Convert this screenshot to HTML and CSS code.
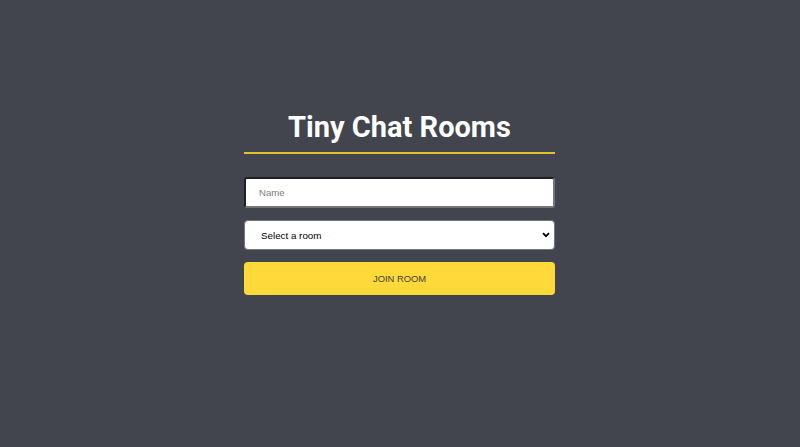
FILE: index.html
```html
<!DOCTYPE html>
<html>
<head>
<meta charset="utf-8">
<link rel="stylesheet" href="styles.css">
</head>
<body>
<main class="page">
  <div class="card">
    <h1 class="title">Tiny Chat Rooms</h1>
    <form class="form">
      <input class="name" type="text" placeholder="Name">
      <select class="room">
        <option>Select a room</option>
      </select>
      <button class="join" type="button">JOIN ROOM</button>
    </form>
  </div>
</main>
</body>
</html>
```
FILE: styles.css
```css
html, body {
  margin: 0;
  height: 100%;
}
body {
  background: #42454e;
  font-family: "Liberation Sans", Arial, sans-serif;
}
.page {
  height: 100%;
  display: flex;
  justify-content: center;
  align-items: flex-start;
  padding-top: 108px;
  box-sizing: border-box;
}
.card {
  width: 311px;
  margin-left: -1px;
}
.title {
  margin: 0;
  font-family: Roboto, sans-serif;
  font-weight: 700;
  font-size: 29px;
  line-height: 38px;
  color: #fff;
  text-align: center;
  padding-bottom: 6px;
  border-bottom: 2px solid #e5c02f;
}
.form {
  display: flex;
  flex-direction: column;
  gap: 12px;
  margin-top: 23px;
}
.name {
  height: 31px;
  box-sizing: border-box;
  border: 2px inset #767676;
  border-radius: 3px;
  padding: 0 13px;
  font-family: "Liberation Sans", Arial, sans-serif;
  font-size: 9.6px;
  background: #fff;
}
.name::placeholder {
  color: #7a7a7a;
}
.room {
  -webkit-appearance: none;
  appearance: none;
  height: 30px;
  box-sizing: border-box;
  border: 1px solid #767676;
  border-radius: 4px;
  padding: 0 12px 0 16px;
  font-family: "Liberation Sans", Arial, sans-serif;
  font-size: 9.8px;
  color: #000;
  background: #fff url("data:image/svg+xml;utf8,<svg xmlns='http://www.w3.org/2000/svg' width='8' height='6' viewBox='0 0 8 6'><path d='M1 1.2l3 3 3-3' fill='none' stroke='black' stroke-width='1.7'/></svg>") no-repeat right 4px center;
}
.join {
  height: 33px;
  border: none;
  border-radius: 4px;
  background: #fdda3a;
  color: #3d3d3d;
  font-family: "Liberation Sans", Arial, sans-serif;
  font-size: 9.4px;
}
```
